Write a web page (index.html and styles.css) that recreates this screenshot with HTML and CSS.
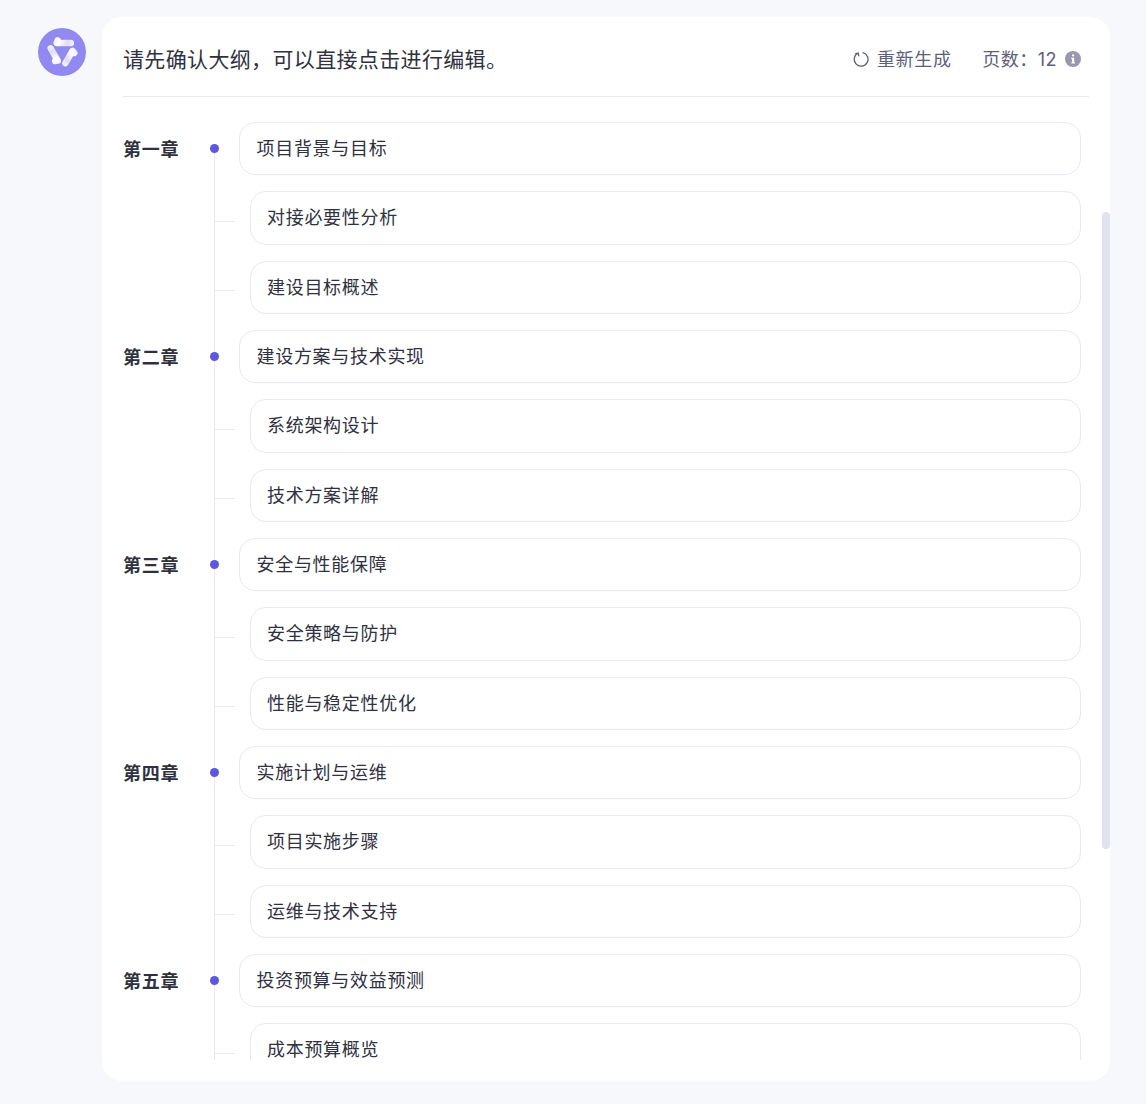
FILE: index.html
```html
<!DOCTYPE html>
<html lang="zh-CN">
<head>
<meta charset="utf-8">
<title>大纲确认</title>
<link rel="stylesheet" href="styles.css">
</head>
<body>
<div class="page">
  <div class="avatar">
    <svg width="48" height="48" viewBox="0 0 48 48">
      <defs>
        <linearGradient id="g" gradientUnits="userSpaceOnUse" x1="16" y1="11" x2="35" y2="17">
          <stop offset="0" stop-color="#f0eefe"/>
          <stop offset="0.3" stop-color="#fefeff"/>
          <stop offset="0.7" stop-color="#dedbfc"/>
          <stop offset="1" stop-color="#f5f4fe"/>
        </linearGradient>
        <g id="arm">
          <path d="M19.6 12.4 L18.6 15 L32.8 15" fill="none" stroke="url(#g)" stroke-width="6.4" stroke-linecap="round" stroke-linejoin="round"/>
        </g>
      </defs>
      <use href="#arm"/>
      <use href="#arm" transform="rotate(120 24.3 23.5)"/>
      <use href="#arm" transform="rotate(240 24.3 23.5)"/>
    </svg>
  </div>
  <main class="card">
    <header class="head">
      <h1 class="title">请先确认大纲，可以直接点击进行编辑。</h1>
      <div class="tools">
        <span class="regen">
          <svg class="regen-icon" width="16" height="16" viewBox="0 0 16 16"><path d="M5.2 2 A6.9 6.9 0 1 0 10 1.6 M5.2 2 L5.7 4.6 M5.2 2 L2.8 2.7" fill="none" stroke="#5d5f78" stroke-width="1.3" stroke-linecap="round"/></svg>
          <span class="regen-label">重新生成</span>
        </span>
        <span class="pages">页数：12</span>
        <svg class="info" width="16" height="16" viewBox="0 0 16 16"><circle cx="8" cy="8" r="8" fill="#9698ae"/><rect x="7" y="3.2" width="2.2" height="2.2" rx="1" fill="#fff"/><path d="M6.2 6.7 H9.2 V11.4 H10 V12.6 H6.2 V11.4 H7 V7.9 H6.2 Z" fill="#fff"/></svg>
      </div>
    </header>
    <div class="outline">
      <div class="rail"></div>
      <div class="row"><span class="chapter">第一章</span><span class="dot"></span><div class="box">项目背景与目标</div></div>
      <div class="row sub"><div class="box">对接必要性分析</div></div>
      <div class="row sub"><div class="box">建设目标概述</div></div>
      <div class="row"><span class="chapter">第二章</span><span class="dot"></span><div class="box">建设方案与技术实现</div></div>
      <div class="row sub"><div class="box">系统架构设计</div></div>
      <div class="row sub"><div class="box">技术方案详解</div></div>
      <div class="row"><span class="chapter">第三章</span><span class="dot"></span><div class="box">安全与性能保障</div></div>
      <div class="row sub"><div class="box">安全策略与防护</div></div>
      <div class="row sub"><div class="box">性能与稳定性优化</div></div>
      <div class="row"><span class="chapter">第四章</span><span class="dot"></span><div class="box">实施计划与运维</div></div>
      <div class="row sub"><div class="box">项目实施步骤</div></div>
      <div class="row sub"><div class="box">运维与技术支持</div></div>
      <div class="row"><span class="chapter">第五章</span><span class="dot"></span><div class="box">投资预算与效益预测</div></div>
      <div class="row sub"><div class="box">成本预算概览</div></div>
    </div>
    <div class="scrollbar"></div>
  </main>
</div>
</body>
</html>
```
FILE: styles.css
```css
* { box-sizing: border-box; }
html, body { margin: 0; height: 100%; }
body {
  background: #f7f8fc;
  font-family: Inter, "Noto Sans CJK SC", sans-serif;
  color: #2f3140;
}
.page {
  display: flex;
  align-items: flex-start;
  gap: 16px;
  padding: 17px 36px 23px 38px;
  height: 1104px;
}
.avatar {
  flex: none;
  width: 48px;
  height: 48px;
  margin-top: 11px;
  border-radius: 50%;
  background: #9188f0;
}
.avatar svg { display: block; }
.card {
  position: relative;
  flex: 1;
  height: 1064px;
  background: #fff;
  border-radius: 20px;
  padding: 0 21px 21px 21px;
  display: flex;
  flex-direction: column;
  overflow: hidden;
}
.head {
  flex: none;
  height: 80px;
  display: flex;
  align-items: center;
  justify-content: space-between;
  border-bottom: 1px solid #e8e8f2;
  padding: 4px 8px 0 0;
}
.title {
  margin: 0;
  padding-top: 2px;
  font-size: 21px;
  letter-spacing: 0.35px;
  font-weight: 400;
  line-height: 28px;
}
.tools {
  display: flex;
  align-items: center;
  font-size: 18px;
  letter-spacing: 0.5px;
  line-height: 24px;
  color: #5d5f78;
}
.regen {
  display: flex;
  align-items: center;
  gap: 7.5px;
  margin-right: 30.5px;
}
.regen-icon { flex: none; }
.regen-label { padding-top: 2px; letter-spacing: 0.7px; }
.pages { padding-top: 2px; margin-right: 8px; }
.info { flex: none; }
.outline {
  position: relative;
  flex: 1;
  min-height: 0;
  overflow: hidden;
  padding: 25px 8px 0 0;
  display: flex;
  flex-direction: column;
  gap: 16px;
}
.rail {
  position: absolute;
  left: 91px;
  top: 50px;
  bottom: 0;
  width: 1px;
  background: #e8e8f2;
}
.row {
  position: relative;
  flex: none;
  display: flex;
  align-items: center;
  height: 53.33px;
}
.chapter {
  flex: none;
  width: 87px;
  padding-top: 2px;
  font-size: 18px;
  letter-spacing: 0.8px;
  font-weight: 700;
  line-height: 24px;
}
.dot {
  position: relative;
  top: -0.5px;
  flex: none;
  width: 9px;
  height: 9px;
  margin-right: 20px;
  border-radius: 50%;
  background: #5b57e0;
}
.box {
  flex: 1;
  height: 100%;
  display: flex;
  align-items: center;
  padding: 0 16px 3px;
  background: #fff;
  border: 1px solid #e8e8f2;
  border-radius: 16px;
  font-size: 18px;
  letter-spacing: 0.7px;
}
.dot + .box { padding-left: 16.5px; }
.sub { padding-left: 127px; }
.sub::before {
  content: "";
  position: absolute;
  left: 92px;
  top: calc(50% + 3px);
  width: 20px;
  height: 1px;
  background: #e8e8f2;
}
.scrollbar {
  position: absolute;
  right: 0;
  top: 195px;
  width: 8px;
  height: 637px;
  border-radius: 4px;
  background: #e0e2ec;
}
```
